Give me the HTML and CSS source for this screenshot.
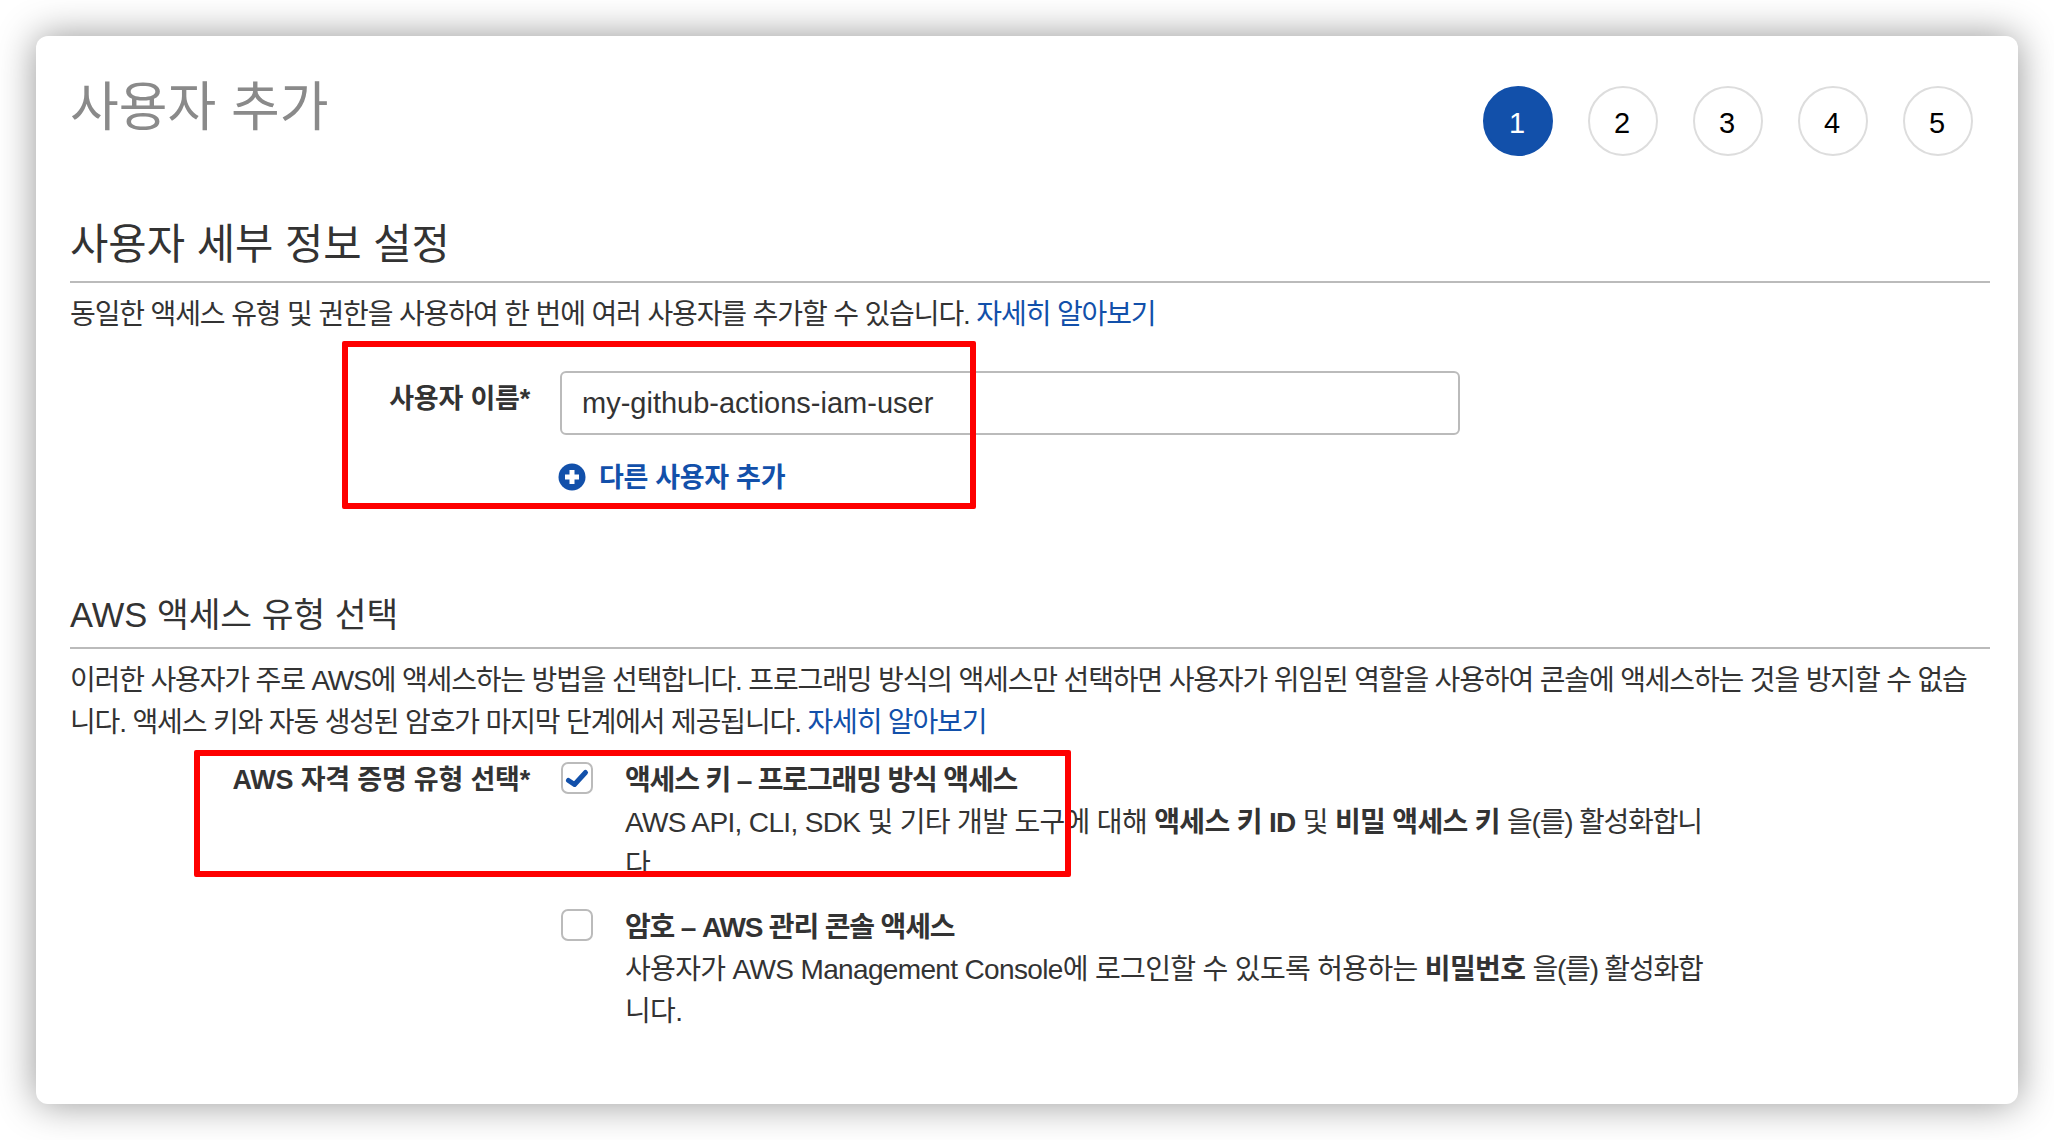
FILE: index.html
```html
<!DOCTYPE html>
<html lang="ko">
<head>
<meta charset="utf-8">
<title>사용자 추가</title>
<link rel="stylesheet" href="styles.css">
</head>
<body>
<main class="card">
  <header class="top">
    <h1 class="title">사용자 추가</h1>
    <ol class="steps">
      <li class="step step-active">1</li>
      <li class="step">2</li>
      <li class="step">3</li>
      <li class="step">4</li>
      <li class="step">5</li>
    </ol>
  </header>

  <section class="details">
    <h2 class="heading heading-lg">사용자 세부 정보 설정</h2>
    <p class="para">동일한 액세스 유형 및 권한을 사용하여 한 번에 여러 사용자를 추가할 수 있습니다. <a class="link" href="#">자세히 알아보기</a></p>
    <div class="form-row name-row">
      <label class="label">사용자 이름*</label>
      <div class="field">
        <div class="input">my-github-actions-iam-user</div>
        <a class="add" href="#">
          <svg class="add-icon" viewBox="0 0 28 28" aria-hidden="true"><circle cx="14" cy="14" r="13.5" fill="#1250aa"/><path d="M14 7v14M7 14h14" stroke="#fff" stroke-width="5" fill="none"/></svg>
          다른 사용자 추가
        </a>
      </div>
    </div>
  </section>

  <section class="access">
    <h2 class="heading heading-md">AWS 액세스 유형 선택</h2>
    <p class="para para-long">이러한 사용자가 주로 AWS에 액세스하는 방법을 선택합니다. 프로그래밍 방식의 액세스만 선택하면 사용자가 위임된 역할을 사용하여 콘솔에 액세스하는 것을 방지할 수 없습<br>니다. 액세스 키와 자동 생성된 암호가 마지막 단계에서 제공됩니다. <a class="link" href="#">자세히 알아보기</a></p>
    <div class="form-row type-row">
      <div class="label">AWS 자격 증명 유형 선택*</div>
      <div class="options">
        <div class="option">
          <span class="check">
            <svg viewBox="0 0 28 28" class="check-mark" aria-hidden="true"><path d="M5.5 16.5l6 4L22.5 8.5" fill="none" stroke="#1250aa" stroke-width="5" stroke-linecap="round" stroke-linejoin="round"/></svg>
          </span>
          <div class="option-text">
            <div class="option-title">액세스 키 – 프로그래밍 방식 액세스</div>
            <div>AWS API, CLI, SDK 및 기타 개발 도구에 대해 <b>액세스 키 ID</b> 및 <b>비밀 액세스 키</b> <span class="tail">을(를) 활성화합니</span><br>다.</div>
          </div>
        </div>
        <div class="option">
          <span class="check"></span>
          <div class="option-text">
            <div class="option-title">암호 – AWS 관리 콘솔 액세스</div>
            <div>사용자가 AWS Management Console에 로그인할 수 있도록 허용하는 <b>비밀번호</b> <span class="tail">을(를) 활성화합</span><br>니다.</div>
          </div>
        </div>
      </div>
    </div>
  </section>

  <div class="mark mark-name"></div>
  <div class="mark mark-type"></div>
</main>
</body>
</html>
```
FILE: styles.css
```css
* { box-sizing: border-box; }
html, body { margin: 0; background: #fff; }
body {
  padding: 36px;
  width: 2054px;
  height: 1140px;
  overflow: hidden;
  font-family: "Liberation Sans", "Noto Sans CJK KR", sans-serif;
  color: #333;
}
.card {
  position: relative;
  width: 1982px;
  height: 1068px;
  padding: 0 28px 0 34px;
  background: #fff;
  border-radius: 12px;
  box-shadow: 0 0 38px rgba(0, 0, 0, .42);
}
.top {
  display: flex;
  justify-content: space-between;
  align-items: flex-start;
  padding: 39px 17px 0 0;
  height: 120px;
}
.title {
  margin: 0;
  font-size: 53px;
  line-height: 66px;
  font-weight: 400;
  color: #8a8a8a;
}
.steps {
  display: flex;
  gap: 35px;
  margin: 11px 0 0;
  padding: 0;
  list-style: none;
}
.step {
  width: 70px;
  height: 70px;
  display: flex;
  align-items: center;
  justify-content: center;
  border: 2px solid #ddd;
  border-radius: 50%;
  font-size: 29px;
  color: #000;
  padding: 4px 2px 0 0;
}
.step-active { background: #1250aa; border-color: #1250aa; color: #fff; }
.heading {
  margin: 0;
  font-weight: 400;
  border-bottom: 2px solid #bbb;
  color: #333;
}
.heading-lg {
  height: 127px;
  padding-top: 64px;
  font-size: 41.7px;
  line-height: 50px;
}
.para {
  margin: 11px 0 0;
  font-size: 28px;
  line-height: 42px;
  letter-spacing: -1.12px;
  white-space: nowrap;
}
.para-long { letter-spacing: -1.15px; }
.link { color: #1250aa; text-decoration: none; }
.form-row {
  display: grid;
  grid-template-columns: 460px 1fr;
  column-gap: 30px;
}
.name-row { margin-top: 35px; }
.label {
  font-size: 27px;
  line-height: 42px;
  font-weight: 700;
  letter-spacing: -0.2px;
  text-align: right;
  white-space: nowrap;
  color: #333;
}
.name-row .label { padding-top: 7px; }
.input {
  width: 900px;
  height: 64px;
  padding-left: 20px;
  border: 2px solid #bbb;
  border-radius: 6px;
  font-size: 29px;
  line-height: 60px;
  color: #333;
}
.add {
  display: flex;
  align-items: center;
  gap: 13px;
  margin-top: 26px;
  margin-left: -2px;
  font-size: 27px;
  line-height: 34px;
  font-weight: 700;
  letter-spacing: -0.3px;
  color: #1250aa;
  text-decoration: none;
}
.add-icon { width: 28px; height: 28px; margin-top: -2px; }
.access { margin-top: 93px; }
.heading-md {
  height: 61px;
  font-size: 34.5px;
  line-height: 54px;
}
.type-row { margin-top: 15px; }
.options { display: flex; flex-direction: column; gap: 20px; }
.option { display: flex; gap: 32px; }
.check {
  flex: none;
  width: 32px;
  height: 32px;
  margin: 3px 0 0 1px;
  border: 2px solid #bbb;
  border-radius: 7px;
  display: block;
}
.check-mark { display: block; width: 28px; height: 28px; }
.option-text {
  padding-top: 1px;
  font-size: 28px;
  line-height: 42px;
  letter-spacing: -0.65px;
  white-space: nowrap;
}
.option-title { font-weight: 700; letter-spacing: -1.15px; }
.tail { letter-spacing: -1.2px; }
.mark {
  position: absolute;
  border: 6px solid #fe0000;
  border-radius: 2px;
}
.mark-name { left: 306px; top: 305px; width: 634px; height: 168px; }
.mark-type { left: 158px; top: 714px; width: 877px; height: 127px; }
```
